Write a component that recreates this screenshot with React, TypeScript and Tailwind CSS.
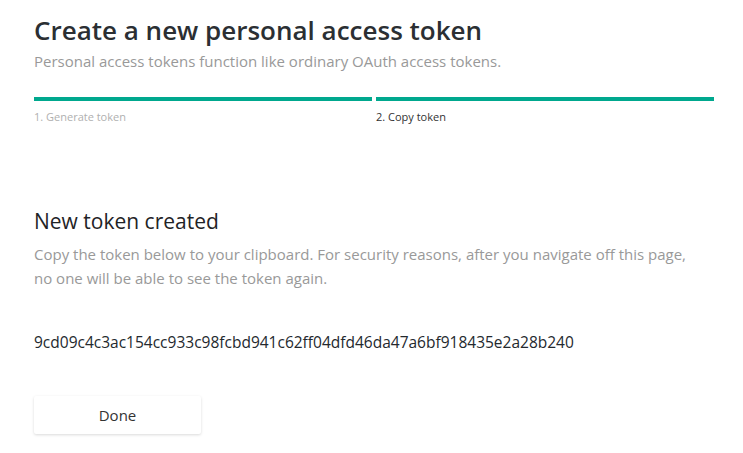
export default function App() {
	return (
		<main className="min-h-screen bg-white font-['Open_Sans',sans-serif] text-[#24292e]">
			<div className="w-[680px] ml-[34px] pt-[10px]">
				<h1 className="text-[26px] leading-[40px] font-semibold text-[#2b2f33]">Create a new personal access token</h1>
				<p className="text-[15px] leading-[22px] text-[#999]">
					Personal access tokens function like ordinary OAuth access tokens.
				</p>

				<div className="mt-[25px] grid grid-cols-2 gap-[4px]">
					<div>
						<div className="h-[4px] bg-[#00a88e]" />
						<div className="mt-[8px] text-[11px] leading-[16px] text-[#b0b0b0]">1. Generate token</div>
					</div>
					<div>
						<div className="h-[4px] bg-[#00a88e]" />
						<div className="mt-[8px] text-[11px] leading-[16px] text-[#333]">2. Copy token</div>
					</div>
				</div>

				<h2 className="mt-[81px] text-[21px] leading-[30px] font-normal text-[#1f2326]">New token created</h2>
				<p className="mt-[6px] max-w-[666px] text-[15px] leading-[24px] text-[#999]">
					Copy the token below to your clipboard. For security reasons, after you navigate off this page, no one will be able to see the token again.
				</p>

				<div className="mt-[42px] text-[15.5px] leading-[20px] text-[#24292e]">
					9cd09c4c3ac154cc933c98fcbd941c62ff04dfd46da47a6bf918435e2a28b240
				</div>

				<button className="mt-[44px] flex h-[38px] w-[167px] items-center justify-center rounded-[2px] bg-white text-[15px] text-[#333] shadow-[0_1px_3px_rgba(0,0,0,0.15)]">
					Done
				</button>
			</div>
		</main>
	);
}
